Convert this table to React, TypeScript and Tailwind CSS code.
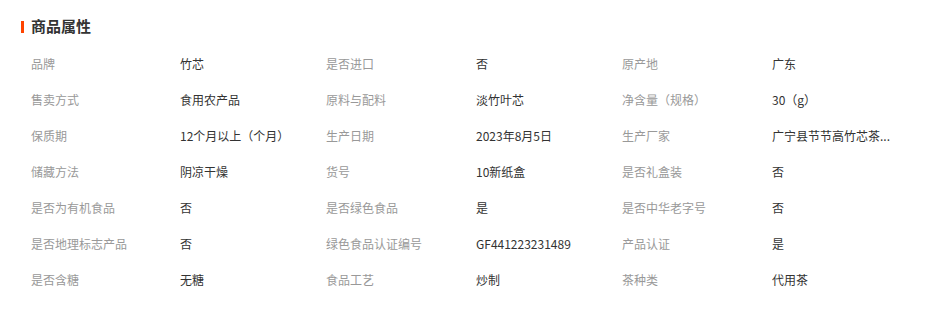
import React from "react";

const rows: [string, string, string, string, string, string][] = [
  ["品牌", "竹芯", "是否进口", "否", "原产地", "广东"],
  ["售卖方式", "食用农产品", "原料与配料", "淡竹叶芯", "净含量（规格）", "30（g）"],
  ["保质期", "12个月以上（个月）", "生产日期", "2023年8月5日", "生产厂家", "广宁县节节高竹芯茶..."],
  ["储藏方法", "阴凉干燥", "货号", "10新纸盒", "是否礼盒装", "否"],
  ["是否为有机食品", "否", "是否绿色食品", "是", "是否中华老字号", "否"],
  ["是否地理标志产品", "否", "绿色食品认证编号", "GF441223231489", "产品认证", "是"],
  ["是否含糖", "无糖", "食品工艺", "炒制", "茶种类", "代用茶"],
];

export default function App() {
  return (
    <div
      className="w-[940px] h-[313px] bg-white overflow-hidden"
      style={{ fontFamily: '"Noto Sans CJK SC", "Noto Sans", sans-serif' }}
    >
      <div className="pt-[17px] pl-[21px] flex items-center h-[35px]">
        <div className="w-[3px] h-[12px] bg-[#ff4400] mr-[7px] mt-[1px]" />
        <div className="text-[15px] leading-[18px] font-bold text-[#333]">商品属性</div>
      </div>
      <div className="pl-[31px] mt-[11px] text-[12px]">
        {rows.map((r, i) => (
          <div key={i} className="flex items-center h-[36px] leading-[36px] whitespace-nowrap">
            <div className="w-[149px] shrink-0 text-[#999]">{r[0]}</div>
            <div className="w-[146px] shrink-0 text-[#333]">{r[1]}</div>
            <div className="w-[150px] shrink-0 text-[#999]">{r[2]}</div>
            <div className="w-[146px] shrink-0 text-[#333]">{r[3]}</div>
            <div className="w-[150px] shrink-0 text-[#999]">{r[4]}</div>
            <div className="w-[146px] shrink-0 text-[#333]">{r[5]}</div>
          </div>
        ))}
      </div>
    </div>
  );
}
